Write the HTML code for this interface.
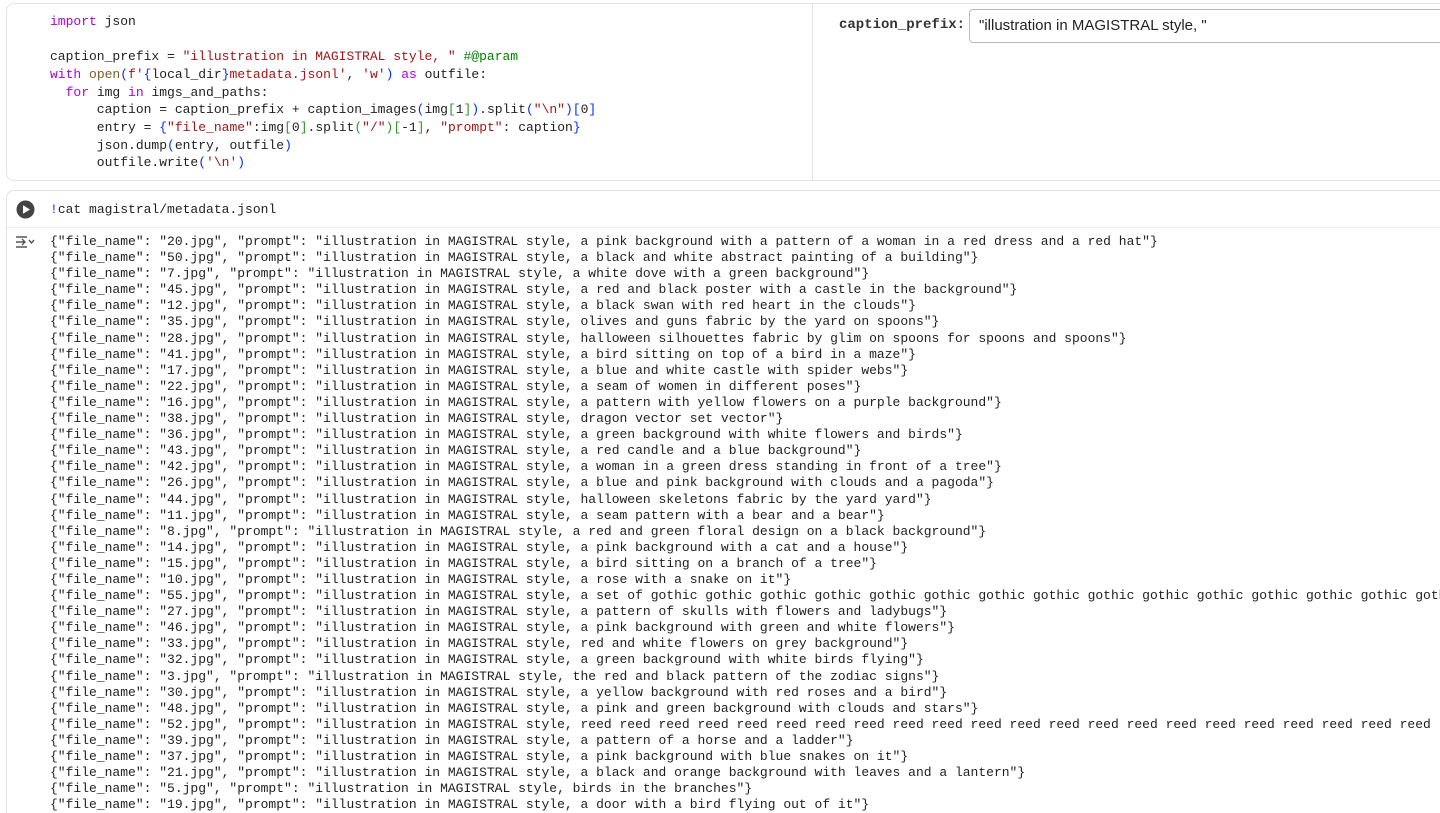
<!DOCTYPE html>
<html><head><meta charset="utf-8"><style>
html,body{margin:0;width:1440px;height:813px;overflow:hidden;background:#fff;font-family:"Liberation Mono",monospace;}
.wrap{position:relative;width:1440px;height:813px;overflow:hidden}
.cell1{position:absolute;left:6px;top:3px;width:1450px;height:176px;border:1px solid #e3e3e3;border-radius:8px;background:#fff}
.code{position:absolute;left:50px;top:13px;font-size:13px;line-height:17.65px;white-space:pre;color:#1f1f1f}
.div{position:absolute;left:812px;top:4px;width:1px;height:176px;background:#e3e3e3}
.lbl{position:absolute;left:839px;top:17px;font-weight:bold;font-size:14px;color:#333}
.inp{position:absolute;left:969px;top:9px;width:500px;height:32px;border:1px solid #bbb;border-radius:4px;font-family:"Liberation Sans",sans-serif;font-size:15px;line-height:32px;padding-left:9px;color:#222}
.cell2{position:absolute;left:6px;top:190px;width:1450px;height:640px;border:1px solid #e3e3e3;border-radius:8px}
.sep{position:absolute;left:7px;top:227px;width:1433px;height:1px;background:#ececec}
.cmd{position:absolute;left:50px;top:201px;font-size:13px;white-space:pre;color:#1f1f1f;line-height:18px}
.out{position:absolute;left:50px;top:234px;width:1390px;overflow:hidden;font-size:13px;line-height:16.09px;white-space:pre;color:#1f1f1f}
.k{color:#af00db}.s{color:#a31515}.c{color:#008000}.f{color:#795e26}.b{color:#0431fa}.g{color:#319331}
</style></head><body><div class="wrap">
<div class="cell1"></div>
<div class="code"><span class="k">import</span> json

caption_prefix = <span class="s">"illustration in MAGISTRAL style, "</span> <span class="c">#@param</span>
<span class="k">with</span> <span class="f">open</span><span class="b">(</span><span class="s">f'</span><span class="b">{</span>local_dir<span class="b">}</span><span class="s">metadata.jsonl'</span>, <span class="s">'w'</span><span class="b">)</span> <span class="k">as</span> outfile:
  <span class="k">for</span> img <span class="k">in</span> imgs_and_paths:
      caption = caption_prefix + caption_images<span class="b">(</span>img<span class="g">[</span>1<span class="g">]</span><span class="b">)</span>.split<span class="b">(</span><span class="s">"\n"</span><span class="b">)</span><span class="b">[</span>0<span class="b">]</span>
      entry = <span class="b">{</span><span class="s">"file_name"</span>:img<span class="g">[</span>0<span class="g">]</span>.split<span class="g">(</span><span class="s">"/"</span><span class="g">)</span><span class="g">[</span>-1<span class="g">]</span>, <span class="s">"prompt"</span>: caption<span class="b">}</span>
      json.dump<span class="b">(</span>entry, outfile<span class="b">)</span>
      outfile.write<span class="b">(</span><span class="s">'\n'</span><span class="b">)</span></div>
<div class="div"></div>
<div class="lbl">caption_prefix:</div>
<div class="inp">"illustration in MAGISTRAL style, "</div>
<div class="cell2"></div>
<div class="sep"></div>
<svg style="position:absolute;left:16px;top:200px" width="19" height="19"><circle cx="9.5" cy="9.5" r="9" fill="#444"/><path d="M7 5.3 L14 9.5 L7 13.7Z" fill="#fff"/></svg>
<div class="cmd"><span class="b">!</span>cat magistral/metadata.jsonl</div>
<svg style="position:absolute;left:15px;top:235px" width="20" height="14" fill="none" stroke="#555" stroke-width="1.4"><path d="M1 2H12M1 12H12M1 7H10M7 4L10 7L7 10M14 5L16.5 8L19 5"/></svg>
<div class="out">{"file_name": "20.jpg", "prompt": "illustration in MAGISTRAL style, a pink background with a pattern of a woman in a red dress and a red hat"}
{"file_name": "50.jpg", "prompt": "illustration in MAGISTRAL style, a black and white abstract painting of a building"}
{"file_name": "7.jpg", "prompt": "illustration in MAGISTRAL style, a white dove with a green background"}
{"file_name": "45.jpg", "prompt": "illustration in MAGISTRAL style, a red and black poster with a castle in the background"}
{"file_name": "12.jpg", "prompt": "illustration in MAGISTRAL style, a black swan with red heart in the clouds"}
{"file_name": "35.jpg", "prompt": "illustration in MAGISTRAL style, olives and guns fabric by the yard on spoons"}
{"file_name": "28.jpg", "prompt": "illustration in MAGISTRAL style, halloween silhouettes fabric by glim on spoons for spoons and spoons"}
{"file_name": "41.jpg", "prompt": "illustration in MAGISTRAL style, a bird sitting on top of a bird in a maze"}
{"file_name": "17.jpg", "prompt": "illustration in MAGISTRAL style, a blue and white castle with spider webs"}
{"file_name": "22.jpg", "prompt": "illustration in MAGISTRAL style, a seam of women in different poses"}
{"file_name": "16.jpg", "prompt": "illustration in MAGISTRAL style, a pattern with yellow flowers on a purple background"}
{"file_name": "38.jpg", "prompt": "illustration in MAGISTRAL style, dragon vector set vector"}
{"file_name": "36.jpg", "prompt": "illustration in MAGISTRAL style, a green background with white flowers and birds"}
{"file_name": "43.jpg", "prompt": "illustration in MAGISTRAL style, a red candle and a blue background"}
{"file_name": "42.jpg", "prompt": "illustration in MAGISTRAL style, a woman in a green dress standing in front of a tree"}
{"file_name": "26.jpg", "prompt": "illustration in MAGISTRAL style, a blue and pink background with clouds and a pagoda"}
{"file_name": "44.jpg", "prompt": "illustration in MAGISTRAL style, halloween skeletons fabric by the yard yard"}
{"file_name": "11.jpg", "prompt": "illustration in MAGISTRAL style, a seam pattern with a bear and a bear"}
{"file_name": "8.jpg", "prompt": "illustration in MAGISTRAL style, a red and green floral design on a black background"}
{"file_name": "14.jpg", "prompt": "illustration in MAGISTRAL style, a pink background with a cat and a house"}
{"file_name": "15.jpg", "prompt": "illustration in MAGISTRAL style, a bird sitting on a branch of a tree"}
{"file_name": "10.jpg", "prompt": "illustration in MAGISTRAL style, a rose with a snake on it"}
{"file_name": "55.jpg", "prompt": "illustration in MAGISTRAL style, a set of gothic gothic gothic gothic gothic gothic gothic gothic gothic gothic gothic gothic gothic gothic gothic gothic gothic gothic"}
{"file_name": "27.jpg", "prompt": "illustration in MAGISTRAL style, a pattern of skulls with flowers and ladybugs"}
{"file_name": "46.jpg", "prompt": "illustration in MAGISTRAL style, a pink background with green and white flowers"}
{"file_name": "33.jpg", "prompt": "illustration in MAGISTRAL style, red and white flowers on grey background"}
{"file_name": "32.jpg", "prompt": "illustration in MAGISTRAL style, a green background with white birds flying"}
{"file_name": "3.jpg", "prompt": "illustration in MAGISTRAL style, the red and black pattern of the zodiac signs"}
{"file_name": "30.jpg", "prompt": "illustration in MAGISTRAL style, a yellow background with red roses and a bird"}
{"file_name": "48.jpg", "prompt": "illustration in MAGISTRAL style, a pink and green background with clouds and stars"}
{"file_name": "52.jpg", "prompt": "illustration in MAGISTRAL style, reed reed reed reed reed reed reed reed reed reed reed reed reed reed reed reed reed reed reed reed reed reed reed reed"}
{"file_name": "39.jpg", "prompt": "illustration in MAGISTRAL style, a pattern of a horse and a ladder"}
{"file_name": "37.jpg", "prompt": "illustration in MAGISTRAL style, a pink background with blue snakes on it"}
{"file_name": "21.jpg", "prompt": "illustration in MAGISTRAL style, a black and orange background with leaves and a lantern"}
{"file_name": "5.jpg", "prompt": "illustration in MAGISTRAL style, birds in the branches"}
{"file_name": "19.jpg", "prompt": "illustration in MAGISTRAL style, a door with a bird flying out of it"}</div>
</div></body></html>
